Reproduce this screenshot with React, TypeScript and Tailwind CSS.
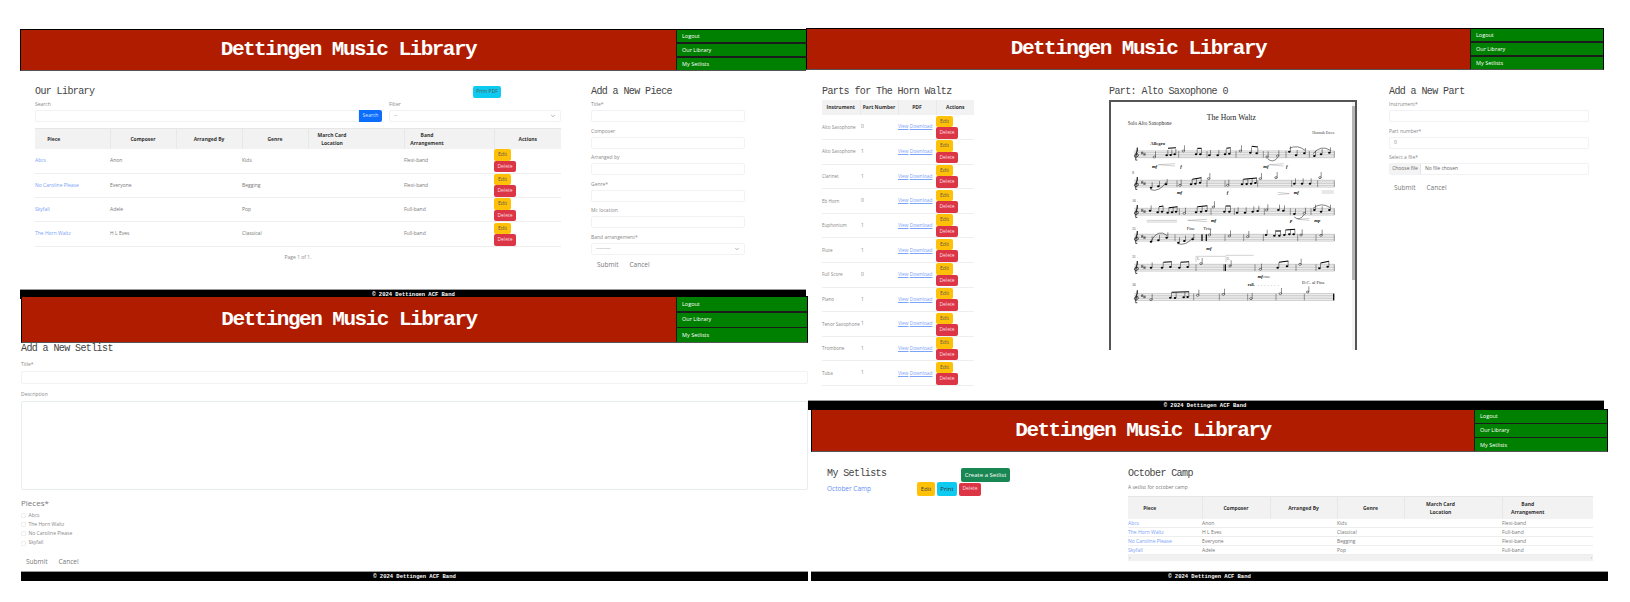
import { ChevronDown } from "lucide-react";

const sans = "font-['Open_Sans',sans-serif]";
const mono = "font-['Liberation_Mono',monospace]";

const Header = ({ menuWidth, height }: { menuWidth: string; height: string }) => (
  <header className={`flex ${height} shrink-0 items-stretch border border-black border-b-[#555] bg-[#af1c00]`}>
    <h1 className={`flex flex-1 items-center justify-center text-[21px] font-bold tracking-[-1.5px] text-white ${mono}`}>
      Dettingen Music Library
    </h1>
    <nav className={`flex ${menuWidth} shrink-0 flex-col gap-[1.5px] bg-[#1c1c1c] pl-[1px]`}>
      {["Logout", "Our Library", "My Setlists"].map((item) => (
        <div key={item} className={`flex flex-1 items-center bg-[#008000] pl-[5px] text-[5.5px] text-white ${sans}`}>
          {item}
        </div>
      ))}
    </nav>
  </header>
);

const Footer = () => (
  <footer
    className={`mt-auto h-[10px] shrink-0 border-t border-[#999] bg-black text-center text-[5.5px] leading-[9px] font-bold text-white ${mono}`}
  >
    © 2024 Dettingen ACF Band
  </footer>
);

const Heading = ({ children }: { children: React.ReactNode }) => (
  <h2 className={`text-[10px] leading-[12px] tracking-[-0.6px] text-[#444] ${mono}`}>{children}</h2>
);

const Field = ({ label, value, select }: { label: string; value?: string; select?: boolean }) => (
  <div className="mb-[5.5px]">
    <div className="h-[9px] text-[5px] leading-[6px] text-[#888]">{label}</div>
    <div className="flex h-[12px] items-center justify-between rounded-[2px] border border-[#f1f2f3] bg-white px-[4px] text-[5px] text-[#888]">
      {value}
      {select && <ChevronDown size={6} strokeWidth={2} color="#666" />}
    </div>
  </div>
);

const FormActions = ({ className }: { className: string }) => (
  <div className={`flex gap-[11px] text-[6.5px] leading-[10px] text-[#777] ${className}`}>
    <span>Submit</span>
    <span>Cancel</span>
  </div>
);

const RowButtons = () => (
  <div className="flex flex-col items-start">
    <span className="flex h-[11.5px] w-[17px] items-center justify-center rounded-[2px] bg-[#ffc107] text-[5px] text-[#555]">
      Edit
    </span>
    <span className="flex h-[11.5px] w-[22px] items-center justify-center rounded-[2px] bg-[#dc3545] text-[5px] text-[#fbdde0]">
      Delete
    </span>
  </div>
);

const pieces = [
  ["Abcs", "Anon", "Kids", "Flexi-band"],
  ["No Caroline Please", "Everyone", "Begging", "Flexi-band"],
  ["Skyfall", "Adele", "Pop", "Full-band"],
  ["The Horn Waltz", "H L Eves", "Classical", "Full-band"],
];

const setlistPieces = [pieces[0], pieces[3], pieces[1], pieces[2]];

const parts = [
  ["Alto Saxophone", "0"],
  ["Alto Saxophone", "1"],
  ["Clarinet", "1"],
  ["Eb Horn", "0"],
  ["Euphonium", "1"],
  ["Flute", "1"],
  ["Full Score", "0"],
  ["Piano", "1"],
  ["Tenor Saxophone", "1"],
  ["Trombone", "1"],
  ["Tuba", "1"],
];

const LibraryPanel = () => (
  <section className={`absolute top-[29px] left-[20px] flex h-[270px] w-[787px] flex-col bg-white ${sans}`}>
    <Header menuWidth="w-[130px]" height="h-[42px]" />
    <div className="flex gap-[30px] pt-[15px] pl-[15px]">
      <div className="w-[526px]">
        <div className="flex h-[12px] items-center justify-between pr-[60px]">
          <Heading>Our Library</Heading>
          <span className="flex h-[12px] w-[28px] items-center justify-center rounded-[2px] bg-[#0dcaf0] text-[5px] text-[#555]">
            Print PDF
          </span>
        </div>
        <div className="mt-[3px] grid grid-cols-[347px_172px] gap-[7px]">
          <div>
            <div className="h-[9px] text-[5px] leading-[6px] text-[#888]">Search</div>
            <div className="flex h-[12px]">
              <div className="flex-1 rounded-l-[2px] border border-[#f1f2f3]" />
              <span className="flex w-[23px] items-center justify-center rounded-r-[2px] bg-[#0d6efd] text-[5px] text-[#cfe2ff]">
                Search
              </span>
            </div>
          </div>
          <Field label="Filter" value="--" select />
        </div>
        <table className="w-[526px] table-fixed text-[5px] text-[#777]">
          <colgroup>
            <col className="w-[75px]" />
            <col className="w-[66px]" />
            <col className="w-[66px]" />
            <col className="w-[66px]" />
            <col className="w-[96px]" />
            <col className="w-[90px]" />
            <col className="w-[67px]" />
          </colgroup>
          <thead>
            <tr className="h-[21px] border-t border-[#e6e6e6] bg-[#f2f2f2] text-center leading-[8px] font-bold text-[#333]">
              <th className="border-r border-[#e8e8e8] pr-[37px]">Piece</th>
              <th className="border-r border-[#e8e8e8]">Composer</th>
              <th className="border-r border-[#e8e8e8]">Arranged By</th>
              <th className="border-r border-[#e8e8e8]">Genre</th>
              <th className="border-r border-[#e8e8e8] pr-[48px]">
                March Card
                <br />
                Location
              </th>
              <th className="border-r border-[#e8e8e8] pr-[44px]">
                Band
                <br />
                Arrangement
              </th>
              <th>Actions</th>
            </tr>
          </thead>
          <tbody>
            {pieces.map(([piece, composer, genre, band]) => (
              <tr key={piece} className="h-[24.3px] border-b border-[#eeeeee]">
                <td className="text-[#7ba3f7]">{piece}</td>
                <td>{composer}</td>
                <td />
                <td>{genre}</td>
                <td />
                <td>{band}</td>
                <td>
                  <RowButtons />
                </td>
              </tr>
            ))}
          </tbody>
        </table>
        <div className="mt-[7px] text-center text-[5px] leading-[7px] text-[#888]">Page 1 of 1.</div>
      </div>
      <div className="w-[154px]">
        <Heading>Add a New Piece</Heading>
        <div className="mt-[3px]">
          <Field label="Title*" />
          <Field label="Composer" />
          <Field label="Arranged by" />
          <Field label="Genre*" />
          <Field label="Mc location" />
          <Field label="Band arrangement*" value="---------" select />
        </div>
        <FormActions className="mt-[1px] pl-[6px]" />
      </div>
    </div>
    <Footer />
  </section>
);

type Stave = {
  y: number;
  bars: number[];
  heavy: number[];
  halves: [number, number][];
  notes: [number, number][];
  beams: [number, number, number, number][];
  slurs: string[];
};

const staves: Stave[] = [
  {
    y: 190,
    bars: [233, 318, 405, 487, 555, 625, 700],
    heavy: [],
    halves: [[160, 8], [247, -10], [418, -10], [498, 8], [530, 5]],
    notes: [[197, 3], [209, 2], [221, 0], [285, 0], [298, 0], [325, 3], [350, 3], [372, 0], [385, -2], [448, -5], [467, -3], [565, -8], [585, 3], [610, -3], [640, 5], [660, 0], [685, -5]],
    beams: [[201, 172, 225, 170], [289, 172, 302, 172], [376, 172, 389, 170], [452, 166, 471, 168]],
    slurs: ["M500 203 Q515 218 530 200", "M565 172 Q590 160 612 178", "M636 188 Q660 160 688 178"],
  },
  {
    y: 278,
    bars: [228, 318, 372, 470, 572, 650, 700],
    heavy: [],
    halves: [[237, 5], [323, -15], [380, 5], [478, -15], [525, -18], [657, -18]],
    notes: [[150, 12], [172, 8], [195, 2], [270, 2], [283, 0], [297, -3], [423, 2], [437, 1], [450, 0], [463, -2], [580, 0], [603, 0], [627, 0]],
    beams: [[274, 265, 301, 260], [427, 265, 467, 261]],
    slurs: ["M148 296 Q175 305 197 272"],
  },
  {
    y: 362,
    bars: [235, 330, 400, 490, 568, 630, 700],
    heavy: [],
    halves: [[250, 5], [337, -14], [497, -5], [610, 5]],
    notes: [[147, -3], [170, 2], [183, 0], [200, 3], [213, 2], [225, 0], [285, 2], [300, 0], [315, -2], [370, 0], [385, 0], [408, 3], [432, 3], [455, 0], [470, -2], [532, -5], [547, -3], [580, 7], [640, -5], [660, 0], [685, -5]],
    beams: [[174, 347, 187, 345], [204, 350, 229, 347], [289, 347, 319, 344], [374, 345, 389, 345]],
    slurs: ["M580 378 Q595 392 610 370", "M636 352 Q660 332 688 350"],
  },
  {
    y: 440,
    bars: [222, 372, 428, 487, 590, 645, 700],
    heavy: [303, 316],
    halves: [[325, -8], [385, -5], [440, -3], [600, -8], [660, -7]],
    notes: [[150, 12], [172, 8], [197, 0], [232, 15], [250, 10], [275, 5], [495, -8], [520, -6], [535, -6], [550, -8], [565, -10], [578, -10]],
    beams: [[524, 420, 539, 420], [554, 417, 582, 415]],
    slurs: ["M148 454 Q170 410 199 434", "M230 458 Q255 466 278 438"],
  },
  {
    y: 530,
    bars: [285, 368, 462, 585, 645, 700],
    heavy: [373],
    halves: [[300, -12], [387, -5], [478, 5], [597, -10]],
    notes: [[150, 0], [183, 0], [208, -2], [235, 0], [260, -2], [530, 0], [558, -4], [655, 2], [680, -3]],
    beams: [[187, 514, 212, 512], [239, 514, 264, 512], [534, 514, 562, 510], [659, 516, 684, 511]],
    slurs: [],
  },
  {
    y: 618,
    bars: [278, 355, 440, 525, 610],
    heavy: [698],
    halves: [[150, 8], [290, -5], [367, -8], [450, 5], [538, -10], [620, -15]],
    notes: [[208, 2], [222, 3], [248, 1], [260, 0]],
    beams: [[212, 604, 264, 602]],
    slurs: [],
  },
];

const SheetMusic = () => (
  <svg viewBox="30 33 723 747" className="h-[249px] w-[241px] shrink-0">
    <text x="391" y="87" textAnchor="middle" fontFamily="Liberation Serif" fontSize="23" fill="#222">The Horn Waltz</text>
    <text x="80" y="103" fontFamily="Liberation Serif" fontSize="15.5" fill="#333">Solo Alto Saxophone</text>
    <text x="700" y="130" textAnchor="end" fontFamily="Liberation Serif" fontSize="12" fill="#444">Hannah Ewes</text>
    <text x="148" y="163" fontFamily="Liberation Serif" fontSize="14" fontWeight="700" fill="#222">Allegro</text>
    {staves.map((s) => (
      <g key={s.y}>
        {[-10, -5, 0, 5, 10].map((d) => (
          <line key={d} x1="100" x2="700" y1={s.y + d} y2={s.y + d} stroke="#888" strokeWidth="1.4" />
        ))}
        <path
          d={`M109 ${s.y + 17} Q102 ${s.y + 20} 104 ${s.y + 13} L109 ${s.y - 20} Q113 ${s.y - 10} 103 ${s.y} Q96 ${s.y + 8} 106 ${s.y + 9} Q116 ${s.y + 6} 110 ${s.y - 2} Q103 ${s.y - 1} 104 ${s.y + 4}`}
          fill="none"
          stroke="#111"
          strokeWidth="2.2"
        />
        <path d={`M122 ${s.y - 8} v8 M125 ${s.y - 9} v8 M120 ${s.y - 5} h7 M120 ${s.y - 2} h7 M129 ${s.y - 4} v8 M132 ${s.y - 5} v8 M127 ${s.y - 1} h7 M127 ${s.y + 2} h7`} stroke="#222" strokeWidth="1.2" />
        {s.bars.map((x) => (
          <line key={x} x1={x} x2={x} y1={s.y - 10} y2={s.y + 10} stroke="#333" strokeWidth="1.4" />
        ))}
        {s.heavy.map((x) => (
          <rect key={x} x={x - 2} y={s.y - 10} width="4" height="20" fill="#111" />
        ))}
        {s.halves.map(([x, d]) => (
          <g key={x}>
            <ellipse cx={x} cy={s.y + d} rx="3.8" ry="2.8" fill="#fff" stroke="#111" strokeWidth="1.6" />
            <line x1={x + 3.5} x2={x + 3.5} y1={s.y + d} y2={s.y + d - 17} stroke="#111" strokeWidth="1.4" />
          </g>
        ))}
        {s.notes.map(([x, d]) => (
          <g key={x}>
            <ellipse cx={x} cy={s.y + d} rx="3.8" ry="3" fill="#000" />
            <line x1={x + 3.5} x2={x + 3.5} y1={s.y + d} y2={s.y + d - 16} stroke="#111" strokeWidth="1.4" />
          </g>
        ))}
        {s.beams.map(([x1, y1, x2, y2]) => (
          <line key={x1} x1={x1} y1={y1} x2={x2} y2={y2} stroke="#000" strokeWidth="3.2" />
        ))}
        {s.slurs.map((d) => (
          <path key={d} d={d} fill="none" stroke="#111" strokeWidth="1.6" />
        ))}
      </g>
    ))}
    <g fontFamily="Liberation Serif" fontSize="10" fill="#333">
      <text x="94" y="248">8</text>
      <text x="94" y="332">16</text>
      <text x="94" y="416">25</text>
      <text x="94" y="502">31</text>
      <text x="94" y="586">36</text>
    </g>
    <g fontFamily="Liberation Serif" fontSize="14" fontWeight="700" fontStyle="italic" fill="#000">
      <text x="153" y="230">mf</text>
      <text x="238" y="232">f</text>
      <text x="487" y="232">mf</text>
      <text x="555" y="232">f</text>
      <text x="228" y="310">mf</text>
      <text x="377" y="310">f</text>
      <text x="578" y="310">mf</text>
      <text x="330" y="392">mf</text>
      <text x="567" y="392">p</text>
      <text x="640" y="392">mp</text>
      <text x="316" y="476">mf</text>
      <text x="470" y="562">mf</text>
    </g>
    <path d="M172 221 L222 218 M172 221 L222 225 M505 221 L548 218 M505 221 L548 225 M530 304 L565 308 M530 311 L565 308 M662 300 H698 M662 306 H698 M137 388 H228 M137 393 H228 M260 388 L318 385 M260 388 L318 392 M590 385 L625 382 M590 385 L625 388" stroke="#888" strokeWidth="1.2" fill="none" />
    <text x="257" y="416" fontFamily="Liberation Serif" fontSize="14" fill="#222">Fine</text>
    <text x="307" y="416" fontFamily="Liberation Serif" fontSize="14" fill="#222">Trio</text>
    <path d="M285 514 V496 H372 M375 514 V493 H458" fill="none" stroke="#777" strokeWidth="1" />
    <text x="288" y="508" fontFamily="Liberation Serif" fontSize="10" fill="#222">1.</text>
    <text x="378" y="508" fontFamily="Liberation Serif" fontSize="10" fill="#222">2.</text>
    <text x="487" y="562" fontFamily="Liberation Serif" fontSize="9" fontStyle="italic" fill="#222">cresc.</text>
    <text x="440" y="584" fontFamily="Liberation Serif" fontSize="12" fontWeight="700" fill="#222">rall.</text>
    <text x="470" y="584" fontFamily="Liberation Serif" fontSize="12" letterSpacing="7" fill="#222">.......</text>
    <text x="603" y="580" fontFamily="Liberation Serif" fontSize="14" fill="#222">D.C. al Fine</text>
  </svg>
);

const PartsPanel = () => (
  <section className={`absolute top-[28px] left-[806px] flex h-[382px] w-[798px] flex-col bg-white ${sans}`}>
    <Header menuWidth="w-[133px]" height="h-[42px]" />
    <div className="flex pt-[16px] pl-[16px]">
      <div className="w-[287px]">
        <Heading>Parts for The Horn Waltz</Heading>
        <table className="mt-[2px] w-[152px] table-fixed text-[5px] text-[#888]">
          <colgroup>
            <col className="w-[38px]" />
            <col className="w-[38px]" />
            <col className="w-[38px]" />
            <col className="w-[38px]" />
          </colgroup>
          <thead>
            <tr className="h-[15px] bg-[#f2f2f2] text-center font-bold text-[#333]">
              <th className="border-r border-[#e8e8e8]">Instrument</th>
              <th className="border-r border-[#e8e8e8]">Part Number</th>
              <th className="border-r border-[#e8e8e8]">PDF</th>
              <th>Actions</th>
            </tr>
          </thead>
          <tbody>
            {parts.map(([instrument, number], i) => (
              <tr key={i} className="h-[24.6px] border-b border-[#eeeeee]">
                <td className="whitespace-nowrap text-[4.6px]">{instrument}</td>
                <td className="pl-[1px]">{number}</td>
                <td className="whitespace-nowrap text-[4.8px] text-[#7ba3f7]">
                  <span className="underline">View</span> <span className="underline">Download</span>
                </td>
                <td>
                  <RowButtons />
                </td>
              </tr>
            ))}
          </tbody>
        </table>
      </div>
      <div className="w-[280px]">
        <Heading>Part: Alto Saxophone 0</Heading>
        <div className="mt-[2px] flex h-[250px] w-[248px] border-x-2 border-t-2 border-[#555]">
          <SheetMusic />
          <div className="flex w-[5px] flex-col justify-between bg-[#f4f4f4]">
            <div className="mt-[4px] h-[174px] bg-[#b5b5b5]" />
          </div>
        </div>
      </div>
      <div className="w-[200px]">
        <Heading>Add a New Part</Heading>
        <div className="mt-[3px]">
          <Field label="Instrument*" />
          <Field label="Part number*" value="0" />
          <div>
            <div className="h-[9px] text-[5px] leading-[6px] text-[#888]">Select a file*</div>
            <div className="flex h-[12px] items-center rounded-[2px] border border-[#f1f2f3] text-[5px] text-[#666]">
              <span className="flex h-full w-[31px] items-center justify-center border-r border-[#e4e4e4] bg-[#f4f4f4]">
                Choose file
              </span>
              <span className="pl-[4px]">No file chosen</span>
            </div>
          </div>
        </div>
        <FormActions className="mt-[8px] pl-[5px]" />
      </div>
    </div>
    <Footer />
  </section>
);

const NewSetlistPanel = () => (
  <section className={`absolute top-[296px] left-[21px] flex h-[285px] w-[787px] flex-col bg-white ${sans}`}>
    <Header menuWidth="w-[131px]" height="h-[47px]" />
    <div className="text-[#888]">
      <Heading>Add a New Setlist</Heading>
      <div className="mt-[5px] h-[11px] text-[5px] leading-[8px]">Title*</div>
      <div className="h-[13px] rounded-[2px] border border-[#f1f2f3]" />
      <div className="mt-[6px] h-[11px] text-[5px] leading-[8px]">Description</div>
      <div className="h-[89px] rounded-[2px] border border-[#e8edf0]" />
      <div className="mt-[7px] h-[12px] text-[8px] leading-[12px] text-[#777]">Pieces*</div>
      <div className="mt-[2px]">
        {["Abcs", "The Horn Waltz", "No Caroline Please", "Skyfall"].map((piece) => (
          <div key={piece} className="flex h-[9.2px] items-center gap-[2.5px] text-[5px]">
            <span className="h-[5px] w-[5px] rounded-[1px] border border-[#eeeeee]" />
            {piece}
          </div>
        ))}
      </div>
      <FormActions className="mt-[9px] pl-[5px]" />
    </div>
    <Footer />
  </section>
);

const SetlistsPanel = () => (
  <section className={`absolute top-[409px] left-[811px] flex h-[172px] w-[797px] flex-col bg-white ${sans}`}>
    <Header menuWidth="w-[133px]" height="h-[43px]" />
    <div className="flex pt-[16px] pl-[16px]">
      <div className="w-[301px]">
        <div className="flex h-[14px] w-[183px] items-start justify-between">
          <Heading>My Setlists</Heading>
          <span className="flex h-[14px] w-[49px] items-center justify-center rounded-[2px] bg-[#198754] text-[6px] text-white">
            Create a Setlist
          </span>
        </div>
        <div className="flex h-[14px] w-[154px] items-center">
          <span className="w-[90px] text-[6.5px] text-[#5f8ff5]">October Camp</span>
          <span className="flex h-[14px] w-[18px] items-center justify-center rounded-[2px] bg-[#ffc107] text-[6px] text-[#444]">
            Edit
          </span>
          <span className="ml-[2px] flex h-[14px] w-[20px] items-center justify-center rounded-[2px] bg-[#0dcaf0] text-[6px] text-[#333]">
            Print
          </span>
          <span className="ml-[2px] flex h-[13px] w-[22px] items-center justify-center rounded-[2px] bg-[#dc3545] text-[5px] text-[#fbdde0]">
            Delete
          </span>
        </div>
      </div>
      <div className="w-[465px]">
        <Heading>October Camp</Heading>
        <div className="mt-[2px] h-[10px] text-[5px] leading-[10px] text-[#777]">A setlist for october camp</div>
        <table className="mt-[4px] w-[465px] table-fixed text-[5px] text-[#777]">
          <colgroup>
            <col className="w-[74px]" />
            <col className="w-[68px]" />
            <col className="w-[67px]" />
            <col className="w-[67px]" />
            <col className="w-[98px]" />
            <col className="w-[91px]" />
          </colgroup>
          <thead>
            <tr className="h-[22px] border-t border-[#e6e6e6] bg-[#f2f2f2] text-center leading-[8px] font-bold text-[#333]">
              <th className="border-r border-[#e8e8e8] pr-[30px]">Piece</th>
              <th className="border-r border-[#e8e8e8]">Composer</th>
              <th className="border-r border-[#e8e8e8]">Arranged By</th>
              <th className="border-r border-[#e8e8e8]">Genre</th>
              <th className="border-r border-[#e8e8e8] pr-[25px]">
                March Card
                <br />
                Location
              </th>
              <th className="pr-[40px]">
                Band
                <br />
                Arrangement
              </th>
            </tr>
          </thead>
          <tbody>
            {setlistPieces.map(([piece, composer, genre, band]) => (
              <tr key={piece} className="h-[8.5px] border-b border-[#eeeeee] leading-[8px]">
                <td className="text-[#7ba3f7]">{piece}</td>
                <td>{composer}</td>
                <td />
                <td>{genre}</td>
                <td />
                <td>{band}</td>
              </tr>
            ))}
          </tbody>
        </table>
        <div className="flex h-[6px] items-center justify-between bg-[#f1f1f1] px-[1px] text-[4px] text-[#777]">
          <span>‹</span>
          <span>›</span>
        </div>
      </div>
    </div>
    <Footer />
  </section>
);

export default function App() {
  return (
    <div className="relative h-[602px] w-[1630px] overflow-hidden bg-white">
      <LibraryPanel />
      <PartsPanel />
      <NewSetlistPanel />
      <SetlistsPanel />
    </div>
  );
}
